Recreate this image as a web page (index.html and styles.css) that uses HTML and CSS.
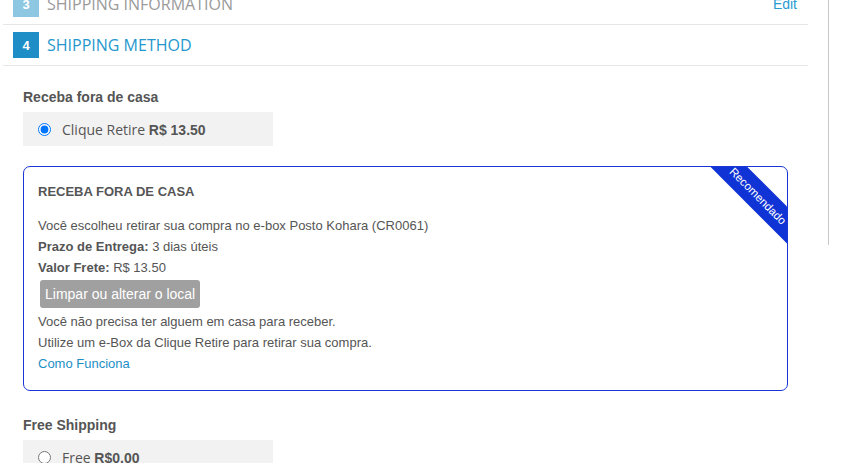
FILE: index.html
```html
<!DOCTYPE html>
<html lang="pt">
<head>
<meta charset="utf-8">
<title>Shipping Method</title>
<link rel="stylesheet" href="styles.css">
</head>
<body>
<div class="layout">
  <main class="checkout">
    <div class="step step-done">
      <span class="step-num">3</span>
      <span class="step-title">SHIPPING INFORMATION</span>
      <a class="step-edit" href="#">Edit</a>
    </div>
    <div class="step step-active">
      <span class="step-num">4</span>
      <span class="step-title">SHIPPING METHOD</span>
    </div>
    <section class="methods">
      <h3 class="group-title">Receba fora de casa</h3>
      <label class="option">
        <input type="radio" name="ship" checked>
        <span class="option-label">Clique Retire <b>R$ 13.50</b></span>
      </label>

      <div class="card">
        <div class="ribbon">Recomendado</div>
        <h4 class="card-title">RECEBA FORA DE CASA</h4>
        <p class="line">Você escolheu retirar sua compra no e-box Posto Kohara (CR0061)</p>
        <p class="line"><b>Prazo de Entrega:</b> 3 dias úteis</p>
        <p class="line"><b>Valor Frete:</b> R$ 13.50</p>
        <button class="btn" type="button">Limpar ou alterar o local</button>
        <p class="line line-gap">Você não precisa ter alguem em casa para receber.</p>
        <p class="line">Utilize um e-Box da Clique Retire para retirar sua compra.</p>
        <p class="line"><a class="link" href="#">Como Funciona</a></p>
      </div>

      <h3 class="group-title group-next">Free Shipping</h3>
      <label class="option">
        <input type="radio" name="ship">
        <span class="option-label">Free <b>R$0,00</b></span>
      </label>
    </section>
  </main>
  <aside class="sidebar"></aside>
</div>
</body>
</html>
```

FILE: styles.css
```css
* { box-sizing: border-box; }
html, body { margin: 0; padding: 0; background: #fff; }
body {
  font-family: "Liberation Sans", Arial, sans-serif;
  font-size: 13px;
  color: #555;
  overflow: hidden;
  height: 463px;
}
.layout {
  display: flex;
  align-items: flex-start;
}
.checkout {
  margin-left: 3px;
  width: 805px;
  flex: none;
}
.sidebar {
  margin-left: 20px;
  width: 1px;
  height: 245px;
  background: #c8c8c8;
  flex: none;
}
.step {
  display: flex;
  align-items: center;
  padding: 7px 11px 7px 10px;
  border-bottom: 1px solid #e6e6e6;
}
.step-done { margin-top: -16px; }
.step-num {
  width: 26px;
  height: 26px;
  display: flex;
  align-items: center;
  justify-content: center;
  color: #fff;
  font-weight: bold;
  font-size: 13px;
  flex: none;
}
.step-title {
  margin-left: 8px;
  font-family: "Open Sans", sans-serif;
  font-size: 16px;
  line-height: 20px;
}
.step-done .step-num { background: #8ec7e2; }
.step-done .step-title { color: #9a9a9a; }
.step-active .step-num { background: #1f8dc6; }
.step-active .step-title { color: #2597cd; }
.step-edit {
  margin-left: auto;
  color: #2a9bd0;
  font-size: 14px;
  text-decoration: none;
}
.methods {
  padding: 21px 0 0 20px;
}
.group-title {
  margin: 0 0 4px;
  font-size: 14px;
  line-height: 21px;
  font-weight: bold;
  color: #555;
}
.group-next { margin-top: 24px; }
.option {
  display: flex;
  align-items: center;
  width: 250px;
  height: 34px;
  padding-left: 15px;
  background: #f2f2f2;
}
.option input {
  margin: 0;
  width: 13px;
  height: 13px;
  flex: none;
}
.option-label {
  margin-left: 11px;
  font-family: "Open Sans", sans-serif;
  font-size: 14px;
  color: #555;
}
.option-label b {
  font-family: "Liberation Sans", Arial, sans-serif;
  font-weight: bold;
}
.card {
  position: relative;
  overflow: hidden;
  margin-top: 20px;
  width: 765px;
  border: 1px solid #1a35d6;
  border-radius: 7px;
  padding: 14px 14px 16px;
}
.ribbon {
  position: absolute;
  top: 16px;
  right: -31px;
  width: 120px;
  height: 26px;
  background: #0f33d4;
  color: #fff;
  font-size: 11.5px;
  line-height: 26px;
  text-align: center;
  transform: rotate(45deg);
}
.card-title {
  margin: 0 0 13px;
  font-size: 13px;
  line-height: 21px;
  font-weight: bold;
  color: #555;
}
.line {
  margin: 0;
  line-height: 21px;
  color: #555;
}
.btn {
  display: block;
  margin: 2px 0 0 2px;
  height: 28px;
  padding: 0 5px;
  border: none;
  border-radius: 3px;
  background: #a0a0a0;
  color: #fff;
  font-family: "Liberation Sans", Arial, sans-serif;
  font-size: 14px;
}
.line-gap { margin-top: 3px; }
.link {
  color: #1e8fc6;
  text-decoration: none;
}
```
